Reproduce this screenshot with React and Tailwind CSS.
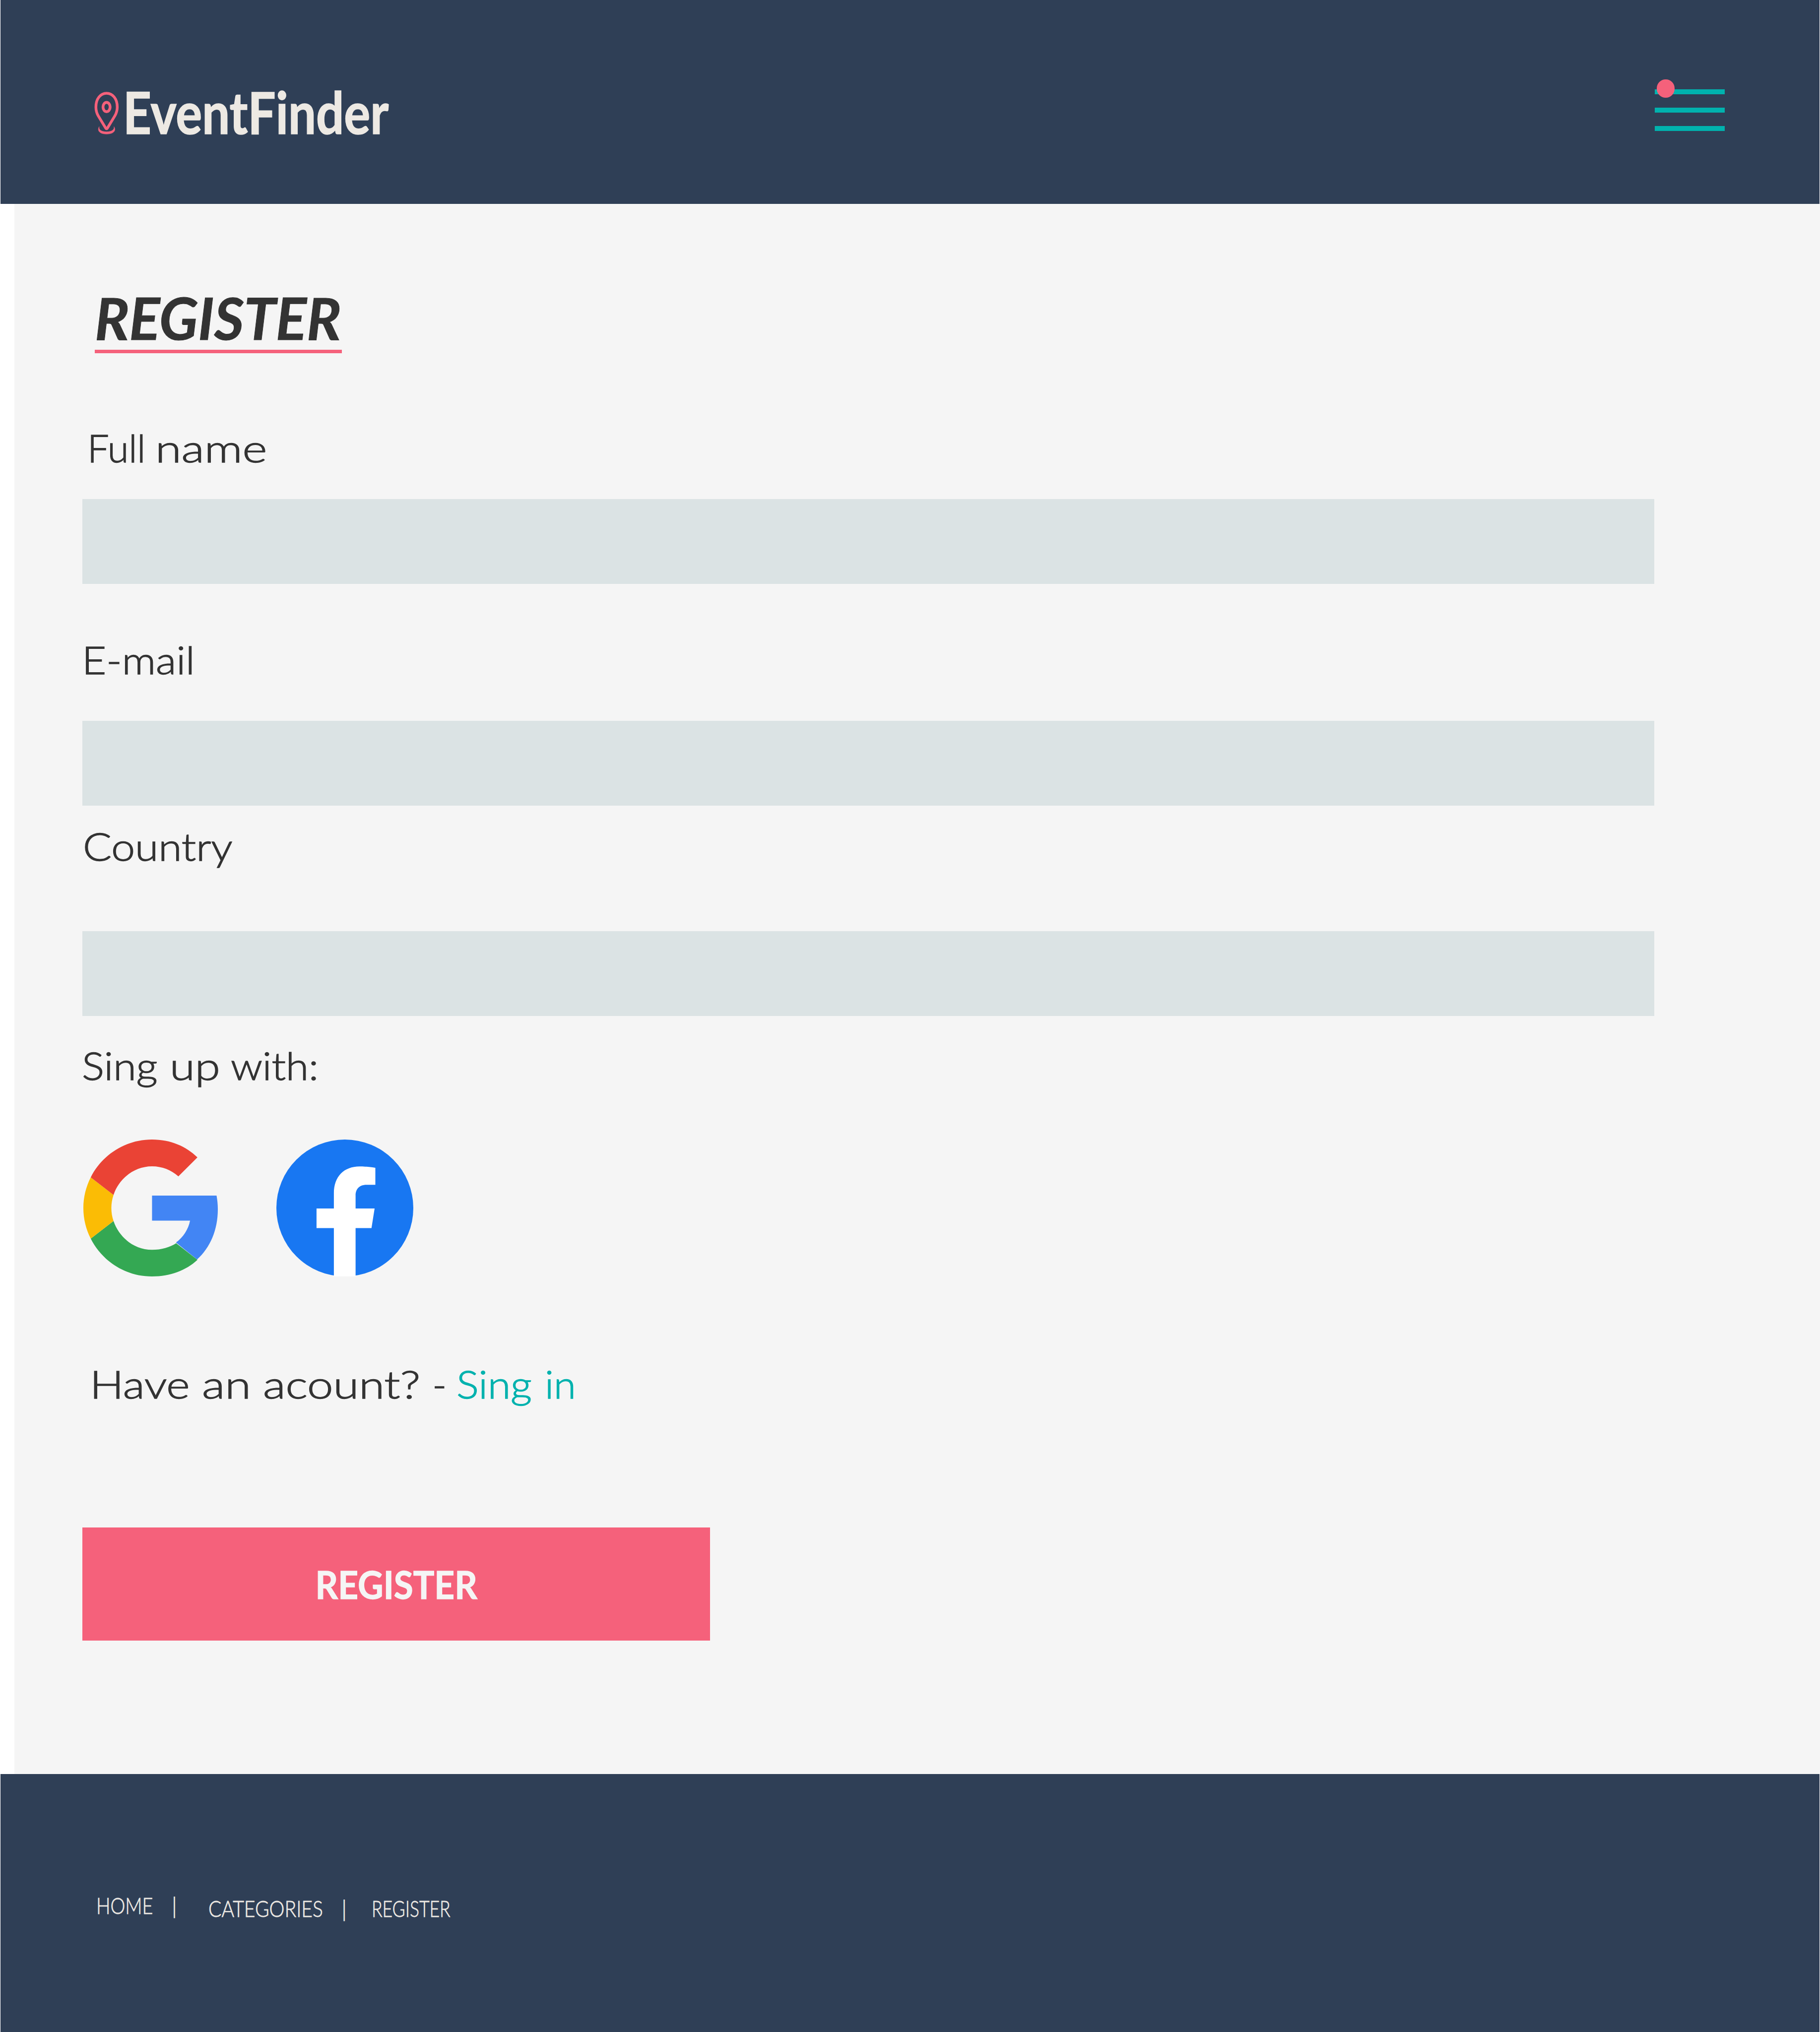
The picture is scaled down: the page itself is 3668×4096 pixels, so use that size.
import React from "react";

const BODY =
  "block w-fit origin-left whitespace-nowrap text-[77px] leading-[79px] font-light [-webkit-text-stroke:1.4px_currentColor]";
const LABEL = `${BODY} text-[#333333]`;
const FOOT =
  "block w-fit origin-left whitespace-nowrap text-[45.2px] leading-[46px] font-light text-[#ede9e3] [-webkit-text-stroke:0.8px_currentColor]";

function PinIcon() {
  return (
    <svg viewBox="0 0 64 110" className="h-[86px] w-[50px] shrink-0" preserveAspectRatio="none" fill="none">
      <path
        d="M31.7 3.8 C16 3.8 4.2 18 4.2 39.5 C4.2 48 6.3 55.2 10.5 62.6 L29.8 94.2 C30.8 95.8 32.6 95.8 33.6 94.2 L52.8 62.6 C57 55.2 59.3 48 59.3 39.5 C59.3 18 47.5 3.8 31.7 3.8 Z"
        stroke="#f5617b"
        strokeWidth="7"
        strokeLinejoin="round"
      />
      <ellipse cx="31.7" cy="39.3" rx="9.2" ry="12" stroke="#f5617b" strokeWidth="7.2" />
      <path
        d="M12.8 90 C7.5 98 11 109 31.7 109 C52.5 109 56.5 98 50.8 90 C52.6 97 46 103.2 31.7 103.2 C17.5 103.2 11 97 12.8 90 Z"
        fill="#f5617b"
        stroke="#f5617b"
        strokeWidth="0.8"
      />
    </svg>
  );
}

function GoogleIcon() {
  return (
    <svg viewBox="0 0 23.49 24" preserveAspectRatio="none" className="h-[276px] w-[271px]">
      <path fill="#4285f4" d="M23.49 12.2c0-.82-.08-1.62-.22-2.38H12v4.39h6.64c-.29 1.5-1.21 2.95-2.46 3.84l3.68 2.98c2.3-2.1 3.63-5.17 3.63-8.83z" />
      <path fill="#34a853" d="M12 24c3.24 0 5.95-1.08 7.93-2.91l-3.72-2.92c-1.08.72-2.59 1.16-4.21 1.16-3.13 0-5.78-2.19-6.73-5.04l-3.98 3.09C3.26 21.3 7.31 24 12 24z" />
      <path fill="#fbbc05" d="M5.27 14.29c-.25-.72-.38-1.49-.38-2.29s.14-1.57.38-2.29L1.29 6.62C.47 8.24 0 10.06 0 12s.47 3.76 1.29 5.38l3.98-3.09z" />
      <path fill="#ea4335" d="M12 4.7c1.77 0 3.35.66 4.6 1.75l3.33-3.32C17.95 1.19 15.24 0 12 0 7.31 0 3.26 2.7 1.29 6.62l3.98 3.09c.95-2.85 3.6-5.01 6.73-5.01z" />
    </svg>
  );
}

function FacebookIcon() {
  return (
    <svg viewBox="0 0 352 352" className="h-[276px] w-[276px]">
      <circle cx="176" cy="176" r="176" fill="#1877f2" />
      <path
        fill="#ffffff"
        d="M147.8 352 V227.7 H103.2 V177.3 H147.8 V138.5 C147.8 94.5 174 69.2 214 69.2 C233 69.2 254.4 72.6 254.4 72.6 V116.3 H232.3 C210.5 116.3 203.6 129.8 203.6 143.7 V177.3 H252.5 L244.5 227.7 H203.6 V352 Z"
      />
    </svg>
  );
}

function MenuButton() {
  return (
    <button type="button" aria-label="Menu" className="relative mt-[180px] flex h-[84px] w-[141px] flex-col justify-between">
      <span className="block h-[10px] w-full bg-[#00b2ae]" />
      <span className="block h-[10px] w-full bg-[#00b2ae]" />
      <span className="block h-[10px] w-full bg-[#00b2ae]" />
      <span className="absolute -top-[20px] left-[3.5px] size-[36.5px] rounded-full bg-[#f5617b]" />
    </button>
  );
}

function Field({ id, className }) {
  return <input id={id} className={`block h-[171px] w-[3168px] bg-[#dbe3e4] outline-none ${className}`} />;
}

export default function App() {
  return (
    <div className="flex h-[4096px] w-[3668px] flex-col overflow-hidden bg-white font-['Lato',sans-serif]">
      <header className="mx-px flex h-[411px] shrink-0 items-start justify-between bg-[#2f3f56] pr-[191px] pl-[189px]">
        <div className="flex items-start">
          <div className="mt-[185px]">
            <PinIcon />
          </div>
          <span className="mt-[166px] ml-[7.7px] block origin-left scale-x-[0.849] text-[117px] leading-[118px] font-bold text-[#ede9e3] [-webkit-text-stroke:1.6px_currentColor]">
            EventFinder
          </span>
        </div>
        <MenuButton />
      </header>

      <main className="ml-[29px] flex h-[3165px] shrink-0 flex-col items-start bg-[#f5f5f5] pl-[137px]">
        <div className="mt-[171px] ml-[25px] w-[498px]">
          <h1 className="w-fit origin-left scale-x-[0.989] text-[117px] leading-[117px] font-bold text-[#333333] italic [-webkit-text-stroke:1px_currentColor]">
            REGISTER
          </h1>
          <div className="mt-[6px] h-[7px] bg-[#f5617b]" />
        </div>

        <label htmlFor="name" className="mt-[151px] ml-[9.5px] flex">
          <span className="w-[137.8px]">
            <span className={`scale-x-[1.006] ${LABEL}`}>Full</span>
          </span>
          <span className={`scale-x-[1.24] ${LABEL}`}>name</span>
        </label>
        <Field id="name" className="mt-[64px]" />

        <label htmlFor="email" className={`mt-[113px] -ml-[0.8px] scale-x-[1.103] ${LABEL}`}>
          E-mail
        </label>
        <Field id="email" className="mt-[84px]" />

        <label htmlFor="country" className={`mt-[42px] ml-[0.6px] scale-x-[1.114] ${LABEL}`}>
          Country
        </label>
        <Field id="country" className="mt-[132px]" />

        <p className="mt-[60px] -ml-px flex">
          <span className="w-[177.1px]">
            <span className={`scale-x-[1.095] ${LABEL}`}>Sing</span>
          </span>
          <span className="w-[123.3px]">
            <span className={`scale-x-[1.2] ${LABEL}`}>up</span>
          </span>
          <span className={`scale-x-[1.085] ${LABEL}`}>with:</span>
        </p>
        <div className="mt-[110px] ml-[2px] flex h-[276px] gap-[118px]">
          <GoogleIcon />
          <FacebookIcon />
        </div>

        <p className="mt-[177px] ml-[14.6px] flex">
          <span className="w-[226.2px]">
            <span className={`scale-x-[1.177] ${LABEL}`}>Have</span>
          </span>
          <span className="w-[123px]">
            <span className={`scale-x-[1.243] ${LABEL}`}>an</span>
          </span>
          <span className="w-[341.7px]">
            <span className={`scale-x-[1.222] ${LABEL}`}>acount?</span>
          </span>
          <span className="w-[48.3px]">
            <span className={LABEL}>-</span>
          </span>
          <a className="flex text-[#00b2ae]">
            <span className="w-[177.8px]">
              <span className={`scale-x-[1.09] ${BODY}`}>Sing</span>
            </span>
            <span className={`scale-x-[1.055] ${BODY}`}>in</span>
          </a>
        </p>

        <button type="button" className="mt-[250px] flex h-[228px] w-[1265px] items-center justify-center bg-[#f5617b]">
          <span className="block scale-x-[0.923] text-[77px] leading-[80px] font-bold text-[#f5f5f5] [-webkit-text-stroke:1.3px_currentColor]">
            REGISTER
          </span>
        </button>
      </main>

      <footer className="mx-px flex h-[520px] shrink-0 items-start bg-[#2f3f56] pl-[192.9px]">
        <div className="mt-[242px] flex">
          <div className="w-[152px]">
            <a className={`scale-x-[0.834] ${FOOT}`}>HOME</a>
          </div>
          <div className="w-[74.1px]">
            <span className={FOOT}>|</span>
          </div>
        </div>
        <div className="mt-[248px] flex">
          <div className="w-[268.3px]">
            <a className={`scale-x-[0.864] ${FOOT}`}>CATEGORIES</a>
          </div>
          <div className="w-[60.4px]">
            <span className={FOOT}>|</span>
          </div>
          <a className={`scale-x-[0.786] ${FOOT}`}>REGISTER</a>
        </div>
      </footer>
    </div>
  );
}
